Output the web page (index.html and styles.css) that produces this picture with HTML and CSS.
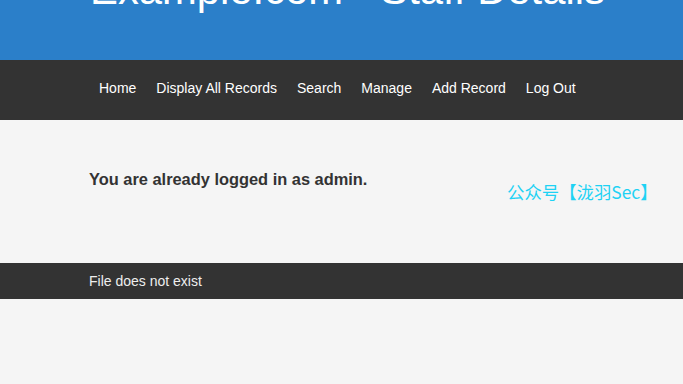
FILE: index.html
```html
<!DOCTYPE html>
<html>
<head>
<meta charset="utf-8">
<link rel="stylesheet" href="styles.css">
</head>
<body>
<header class="banner">
  <h1 class="title">Example.com - Staff Details</h1>
</header>
<nav class="nav">
  <a href="#">Home</a>
  <a href="#">Display All Records</a>
  <a href="#">Search</a>
  <a href="#">Manage</a>
  <a href="#">Add Record</a>
  <a href="#">Log Out</a>
</nav>
<main class="content">
  <p class="msg">You are already logged in as admin.</p>
  <span class="watermark">公众号【泷羽Sec】</span>
</main>
<footer class="foot">File does not exist</footer>
</body>
</html>
```
FILE: styles.css
```css
html, body {
  margin: 0;
  padding: 0;
  background: #f5f5f5;
  font-family: "Liberation Sans", Arial, sans-serif;
}
.banner {
  background: #2b7fc9;
  height: 60px;
  padding-left: 90px;
  overflow: hidden;
}
.title {
  margin: -33px 0 0;
  font-size: 41.8px;
  font-weight: normal;
  color: #fff;
  line-height: 46px;
  white-space: nowrap;
}
.nav {
  background: #333;
  height: 60px;
  display: flex;
  align-items: center;
  padding-left: 89px;
  padding-bottom: 4px;
  box-sizing: border-box;
}
.nav a {
  color: #fff;
  text-decoration: none;
  font-size: 14px;
  padding: 0 10px;
}
.content {
  position: relative;
  height: 143px;
  padding-left: 89px;
  box-sizing: border-box;
  padding-top: 49px;
}
.msg {
  margin: 0;
  font-size: 16.4px;
  font-weight: bold;
  color: #333;
  line-height: 20px;
}
.watermark {
  position: absolute;
  left: 507px;
  top: 59px;
  font-family: "Noto Sans CJK SC", sans-serif;
  font-size: 17.4px;
  color: #1ed2f4;
}
.foot {
  background: #333;
  color: #eee;
  height: 36px;
  line-height: 36px;
  padding-left: 89px;
  font-size: 14px;
}
```
